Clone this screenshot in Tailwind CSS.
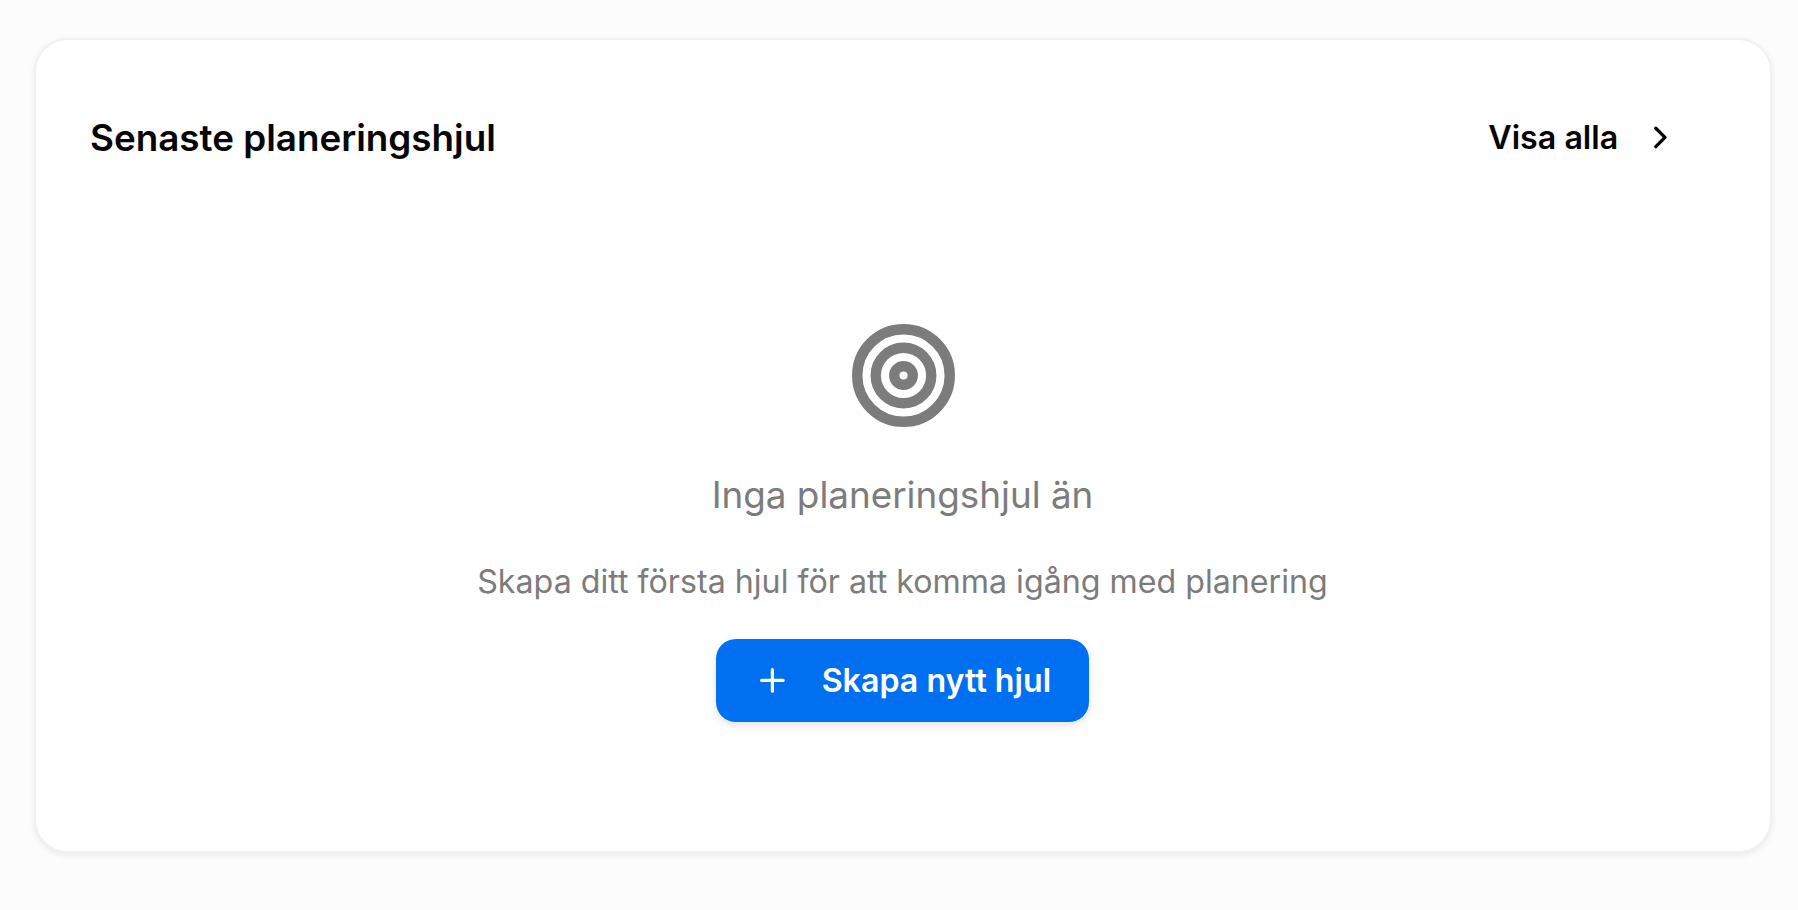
<!DOCTYPE html>
<html lang="sv">
  <head>
    <meta charset="UTF-8" />
    <meta name="viewport" content="width=device-width, initial-scale=1.0" />
    <title>Senaste planeringshjul</title>
    <script src="https://cdn.jsdelivr.net/npm/@tailwindcss/browser@4"></script>
  </head>
  <body class="h-[910px] overflow-hidden bg-[#fcfcfc] font-['Inter',sans-serif]">
    <div class="pt-[38px] pl-[34px] pr-[26px]">
      <div class="h-[815px] rounded-[34px] border-2 border-[#f1f1f1] bg-white pl-[54px] pr-[91px] pt-[74px] shadow-[0_2px_6px_rgba(0,0,0,0.08)]">
        <!-- Header -->
        <div class="flex items-center justify-between">
          <h2 class="text-[36.8px] leading-[48px] font-semibold text-[#050505]">Senaste planeringshjul</h2>
          <a href="#" class="flex items-center gap-[24px] text-[32.2px] leading-[48px] font-semibold text-[#050505]">
            Visa alla
            <svg class="-mt-[2px] size-[36.8px]" viewBox="0 0 24 24" fill="none" stroke="currentColor" stroke-width="2.2" stroke-linecap="round" stroke-linejoin="round">
              <path d="m9 18 6-6-6-6" />
            </svg>
          </a>
        </div>

        <!-- Empty state -->
        <div class="ml-[36px] mt-[158px] flex flex-col items-center">
          <svg class="ml-[2px] size-[111px] text-[#7c7c7c]" viewBox="0 0 24 24" fill="none" stroke="currentColor" stroke-width="2.25">
            <circle cx="12" cy="12" r="10" />
            <circle cx="12" cy="12" r="6" />
            <circle cx="12" cy="12" r="2" />
          </svg>
          <h3 class="mt-[36px] text-[36.8px] leading-[56px] text-[#7c7c7c]">Inga planeringshjul än</h3>
          <p class="mt-[35px] text-[32.2px] leading-[48px] text-[#7c7c7c]">Skapa ditt första hjul för att komma igång med planering</p>
          <button class="mt-[33px] flex h-[83px] w-[373px] items-center justify-center gap-[31px] rounded-[20px] bg-[#0070f0] pt-[2px] text-[32.2px] font-semibold text-white shadow-[0_3px_8px_rgba(0,0,0,0.12)]">
            <svg class="-mt-[2px] size-[36.8px]" viewBox="0 0 24 24" fill="none" stroke="currentColor" stroke-width="2.1" stroke-linecap="round">
              <path d="M5 12h14" />
              <path d="M12 5v14" />
            </svg>
            Skapa nytt hjul
          </button>
        </div>
      </div>
    </div>
  </body>
</html>
